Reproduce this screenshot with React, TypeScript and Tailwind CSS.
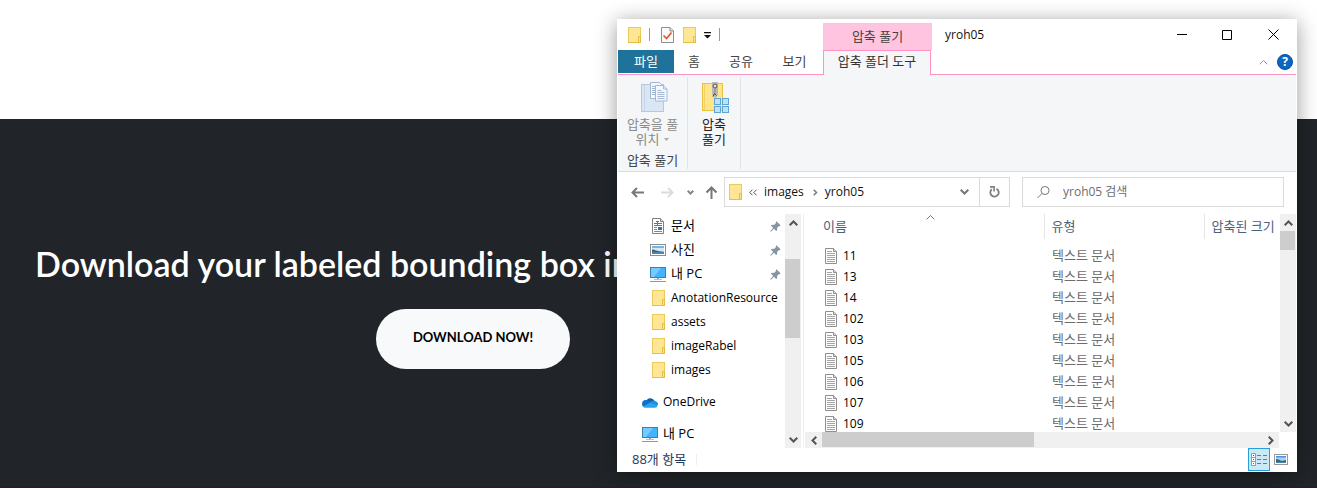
import type { ReactNode } from "react";

const FolderIcon = () => (
  <svg width="14" height="16" viewBox="0 0 14 16" className="shrink-0" aria-hidden="true">
    <rect x="0.5" y="0.5" width="12" height="15" fill="#ffe694" stroke="#ecc95a" />
    <path d="M10.5 9.5h2v6h-2z" fill="#ffe28a" stroke="#e5bd45" />
    <path d="M0.500 15.500h12.500" stroke="#e8c040" />
  </svg>
);

const CheckDocIcon = () => (
  <svg width="13" height="16" viewBox="0 0 13 16" aria-hidden="true">
    <path d="M0.500 0.500h8.500l3.500 3.500v11.500h-12z" fill="#fafafa" stroke="#8f8f8f" />
    <path d="M9 0.500v3.500h3.500" fill="#ddd" stroke="#8f8f8f" />
    <path d="M2.500 8.500l3 3 5-6" fill="none" stroke="#e0592a" strokeWidth="1.700" />
  </svg>
);

const TextFileIcon = () => (
  <svg width="12" height="16" viewBox="0 0 12 16" className="shrink-0" aria-hidden="true">
    <path d="M0.500 0.500h8l3 3v12h-11z" fill="#fdfdfd" stroke="#8e8e8e" />
    <path d="M8.500 0.500v3h3" fill="#ddd" stroke="#8e8e8e" />
    <path d="M2 3.500h5M2 5.500h8M2 7.500h8M2 9.500h8M2 11.500h8M2 13.500h8" stroke="#a4a4a4" />
  </svg>
);

const DocumentsIcon = () => (
  <svg width="16" height="16" viewBox="0 0 16 16" className="shrink-0" aria-hidden="true">
    <path d="M2.500 0.500h8l3 3v12h-11z" fill="#fff" stroke="#808080" />
    <path d="M10.500 0.500v3h3" fill="#ddd" stroke="#808080" />
    <path d="M4 5.500h3M6 3.500h3M8 5.500h4M4 7.500h8M7.500 3v5" stroke="#1c8ad0" />
    <path d="M4 9.500h3M4 11.500h3M4 13.500h8" stroke="#888" />
    <rect x="8" y="9" width="4" height="3" fill="#2b78ad" />
  </svg>
);

const PictureIcon = () => (
  <svg width="16" height="12" viewBox="0 0 16 12" className="shrink-0" aria-hidden="true">
    <rect x="0.500" y="0.500" width="15" height="11" fill="#fff" stroke="#8d8d8d" />
    <rect x="2" y="2" width="12" height="8" fill="#cfe8fa" />
    <rect x="2" y="2" width="12" height="2" fill="#79b1ea" />
    <path d="M2 5.500c3 0 5 2 12 2.200V8H2z" fill="#3f6b5c" />
    <rect x="2" y="8" width="12" height="2" fill="#4d84a8" />
  </svg>
);

const ThumbnailIcon = () => (
  <svg width="14" height="11" viewBox="0 0 14 11" className="shrink-0" aria-hidden="true">
    <rect x="0.500" y="0.500" width="13" height="10" fill="#fff" stroke="#999" />
    <rect x="2" y="2" width="10" height="7" fill="#a9d2f5" />
    <path d="M2 2h10v1.500H2z" fill="#4f93dd" />
    <path d="M2 5c2.500 0 4 1.500 6 2l4-1v3H2z" fill="#3b6a62" />
    <path d="M2 8h10v1H2z" fill="#4a86b0" />
  </svg>
);

const PcIcon = () => (
  <svg width="16" height="15" viewBox="0 0 16 15" className="shrink-0" aria-hidden="true">
    <rect x="0.500" y="0.500" width="15" height="10" fill="#43b4fb" stroke="#3d7fae" />
    <path d="M1 1h10L4 10H1z" fill="#74cbff" />
    <path d="M7 11h2v1.500H7z" fill="#9aabb8" />
    <path d="M4 12.500h8" stroke="#b4c0ca" />
    <path d="M0 14.500h16" stroke="#8499a8" />
  </svg>
);

const CloudIcon = () => (
  <svg width="16" height="11" viewBox="0 0 16 11" className="shrink-0" aria-hidden="true">
    <path d="M4 4.500A4.600 4.600 0 0 1 12.500 3.800L9 7z" fill="#0f5fb0" />
    <path d="M3.600 3C5.500 2.800 7 3.600 9 5L3 10.500A3.800 3.800 0 0 1 3.600 3z" fill="#0a74cc" />
    <path d="M8 5.200c1.500-1.500 3.500-1.800 4.800-1.300A3.400 3.400 0 0 1 15.900 8l-5 1z" fill="#1a8fe0" />
    <path d="M8.500 5.500L15.700 8.500A3 3 0 0 1 13 10.800H3.600A3.300 3.300 0 0 1 1.200 9.500z" fill="#2ba3ec" />
  </svg>
);

const PinIcon = () => (
  <svg width="11" height="11" viewBox="0 0 11 11" className="shrink-0" aria-hidden="true">
    <path d="M6.500 0.300l4.200 4.200-1 0.800-0.700-0.200-2 2 0.200 2-1 1L4 7.800 0.800 10.800 0.200 10.200 3.200 7 1 4.800l1-1 2 0.200 2-2-0.200-0.800z" fill="#8595a3" />
  </svg>
);

const CopyFolderIcon = () => (
  <svg width="27" height="31" viewBox="0 0 27 31" aria-hidden="true">
    <rect x="0.500" y="2.500" width="22" height="27" fill="#dbe6f4" stroke="#b6c7e0" />
    <path d="M3.500 3v26" stroke="#c6d4e8" />
    <path d="M9.500 0.500h9l3 3v13h-12z" fill="#f4f8fc" stroke="#a5b8d3" />
    <path d="M11 4.500h5M11 6.500h3M11 8.500h3M11 10.500h3M11 12.500h3" stroke="#a5b8d3" />
    <path d="M14.500 3.500h8l3.500 3.500v12h-11.500z" fill="#f4f8fc" stroke="#a5b8d3" />
    <path d="M22.500 3.500v3.500h3.500M16.500 8.500h4M16.500 10.500h7M16.500 12.500h7M16.500 14.500h7M16.500 16.500h7" fill="none" stroke="#a5b8d3" />
  </svg>
);

const ZipIcon = () => (
  <svg width="27" height="31" viewBox="0 0 27 31" aria-hidden="true">
    <rect x="0.500" y="1.500" width="20" height="27" fill="#ffe48c" stroke="#e8c13f" />
    <path d="M2.500 2v26" stroke="#f4d266" />
    <path d="M10 0h6v12l-1.500 3.500h-3L10 12z" fill="#b8b8b8" />
    <circle cx="13" cy="4" r="2" fill="#ddd" stroke="#555" />
    <path d="M13 6v5" stroke="#888" />
    <path d="M11 14.500l1.500-3 2 2" fill="none" stroke="#444" />
    <g fill="#b9e2fb" stroke="#62a3d0">
      <rect x="12.500" y="16.500" width="6" height="6" />
      <rect x="20.500" y="16.500" width="6" height="6" />
      <rect x="12.500" y="24.500" width="6" height="6" />
      <rect x="20.500" y="24.500" width="6" height="6" />
    </g>
  </svg>
);

type StrokeProps = { d: string; w: number; h: number; color: string; stroke?: number };
const Stroke = ({ d, w, h, color, stroke = 2 }: StrokeProps) => (
  <svg width={w} height={h} viewBox={`0 0 ${w} ${h}`} fill="none" stroke={color} strokeWidth={stroke} className="shrink-0" aria-hidden="true">
    <path d={d} />
  </svg>
);

const UP = "M0.700 5.300L4.500 1.500l3.800 3.800";
const DOWN = "M0.700 0.700L4.500 4.500l3.800-3.800";

const files = ["11", "13", "14", "102", "103", "105", "106", "107", "109"];

const pinnedPlaces: { name: string; icon: ReactNode }[] = [
  { name: "문서", icon: <DocumentsIcon /> },
  { name: "사진", icon: <PictureIcon /> },
  { name: "내 PC", icon: <PcIcon /> },
];

const folders = ["AnotationResource", "assets", "imageRabel", "images"];

function TitleBar() {
  return (
    <header className="flex h-[31px] items-center">
      <div className="flex w-[205px] items-center pl-[10px]">
        <FolderIcon />
        <span className="ml-[7px] h-[13px] w-px bg-[#999]" />
        <button aria-label="속성" className="ml-[11px]"><CheckDocIcon /></button>
        <button aria-label="새 폴더" className="ml-[9px]"><FolderIcon /></button>
        <button aria-label="빠른 실행 도구 모음" className="ml-[7px] pt-[2px]">
          <svg width="7" height="7" viewBox="0 0 7 7" aria-hidden="true">
            <path d="M0 0h7v1.200H0zM0 3h7L3.500 6.500z" fill="#111" />
          </svg>
        </button>
        <span className="ml-[8px] h-[13px] w-px bg-[#999]" />
      </div>
      <div className="flex h-[27px] w-[109px] items-center justify-center self-end bg-[#ffc4df] pb-[2px] text-[#444]">압축 풀기</div>
      <h2 className="ml-[13px] text-[12px] text-[#111]">yroh05</h2>
      <div className="ml-auto flex h-full">
        <button aria-label="최소화" className="flex w-[45px] items-center justify-center">
          <Stroke w={10} h={11} d="M0 5.500h10" color="#000" stroke={1} />
        </button>
        <button aria-label="최대화" className="flex w-[46px] items-center justify-center">
          <Stroke w={10} h={10} d="M0.500 0.500h9v9h-9z" color="#000" stroke={1} />
        </button>
        <button aria-label="닫기" className="flex w-[46px] items-center justify-center">
          <Stroke w={11} h={11} d="M0.500 0.500l10 10M10.500 0.500l-10 10" color="#000" stroke={1} />
        </button>
      </div>
    </header>
  );
}

function Tabs() {
  return (
    <nav className="flex h-[25px] border-b border-[#ff94c4] text-[#444]">
      <button className="h-[23px] w-[56px] bg-[#1f7299] pb-[2px] text-white">파일</button>
      <button className="h-[23px] w-[40px] pb-[2px]">홈</button>
      <button className="h-[23px] w-[54px] pb-[2px]">공유</button>
      <button className="h-[23px] w-[53px] pb-[2px]">보기</button>
      <button className="ml-[2px] h-[25px] w-[108px] border-x border-t border-[#ff94c4] bg-[#f5f6f7] pb-[5px] text-[#333]">압축 폴더 도구</button>
      <div className="ml-auto flex items-center gap-[9px] pr-[3px]">
        <button aria-label="리본 최소화">
          <Stroke w={9} h={6} d={UP} color="#999" stroke={1} />
        </button>
        <button aria-label="도움말" className="flex size-4 items-center justify-center rounded-full border border-[#0a4f98] bg-[#0b66c3] text-[12px] leading-[14px] font-bold text-white">?</button>
      </div>
    </nav>
  );
}

function Ribbon() {
  return (
    <div className="flex h-[97px] border-b border-[#dadbdc] bg-[#f5f6f7] py-[2px]">
      <section className="flex w-[70px] flex-col items-center border-r border-[#e2e3e4] pt-[5px]">
        <button className="flex flex-col items-center leading-[15px] text-[#8a8a8a]">
          <span className="ml-[3px]"><CopyFolderIcon /></span>
          <span className="mt-[4px]">압축을 풀</span>
          <span className="flex items-center gap-[5px]">
            위치
            <svg width="5" height="3" viewBox="0 0 5 3" aria-hidden="true"><path d="M0 0h5L2.500 3z" fill="#aaa" /></svg>
          </span>
        </button>
        <h3 className="mt-[5px] leading-[17px] text-[#444]">압축 풀기</h3>
      </section>
      <section className="flex w-[53px] flex-col items-center border-r border-[#e2e3e4] pt-[5px]">
        <button className="flex flex-col items-center leading-[15px] text-[#222]">
          <span className="ml-[3px]"><ZipIcon /></span>
          <span className="mt-[4px]">압축</span>
          <span>풀기</span>
        </button>
      </section>
    </div>
  );
}

function AddressRow() {
  return (
    <div className="flex h-[42px] items-center pr-[12px] pb-[2px] pl-[13px]">
      <button aria-label="뒤로"><Stroke w={13} h={11} d="M6 1L1.500 5.500 6 10M1.500 5.500H13" color="#777" /></button>
      <button aria-label="앞으로" className="ml-[17px]"><Stroke w={13} h={11} d="M7 1l4.500 4.500L7 10M0 5.500h11.500" color="#dcdcdc" /></button>
      <button aria-label="최근 위치" className="ml-[13px]"><Stroke w={7} h={5} d="M0.700 0.700L3.500 3.500l2.800-2.800" color="#888" /></button>
      <button aria-label="위로" className="ml-[11px]"><Stroke w={13} h={13} d="M1.500 6.500l5-5 5 5M6.500 1.500V13" color="#777" /></button>
      <div className="ml-[6px] flex h-[30px] w-[286px] items-center border border-[#d9d9d9] pl-[4px] text-[12px] text-[#111]">
        <FolderIcon />
        <span className="ml-[6px]"><Stroke w={8} h={7} d="M3.500 0.700L0.800 3.500l2.700 2.800M7.500 0.700L4.800 3.500l2.700 2.800" color="#555" stroke={1} /></span>
        <a href="#images" className="ml-[7px]">images</a>
        <span className="ml-[9px]"><Stroke w={5} h={7} d="M0.700 0.700l2.800 2.800-2.800 2.800" color="#777" stroke={1.5} /></span>
        <a href="#yroh05" className="ml-[7px]">yroh05</a>
        <button aria-label="이전 위치" className="mr-[10px] ml-auto"><Stroke w={9} h={6} d={DOWN} color="#777" /></button>
        <button aria-label="새로 고침" className="flex h-full w-[30px] items-center justify-center border-l border-[#d9d9d9]">
          <svg width="11" height="12" viewBox="0 0 11 12" fill="none" aria-hidden="true">
            <path d="M7.500 2.700A4.200 4.200 0 1 1 2.800 3.200" stroke="#808080" strokeWidth="1.800" />
            <path d="M1 0.900h4.100v4.600" stroke="#808080" strokeWidth="1.600" />
          </svg>
        </button>
      </div>
      <label className="ml-[12px] flex h-[30px] min-w-0 flex-1 items-center border border-[#d9d9d9] pl-[14px]">
        <Stroke w={13} h={13} d="M12 4.500a4 4 0 1 1-8 0a4 4 0 1 1 8 0M5 7.500L0.500 12" color="#777" stroke={1} />
        <input aria-label="검색" placeholder="yroh05 검색" className="ml-[13px] w-full min-w-0 bg-transparent text-[12px] outline-none placeholder:text-[#6d6d6d]" />
      </label>
    </div>
  );
}

function NavPane() {
  return (
    <aside className="flex w-[186px] shrink-0 border-r border-[#f0f0f0]">
      <div className="min-w-0 flex-1 text-black">
        <ul>
          {pinnedPlaces.map((p) => (
            <li key={p.name} className="flex h-6 items-center pr-[4px] pl-[32px]">
              {p.icon}
              <span className="ml-[5px] pb-[2px]">{p.name}</span>
              <span className="ml-auto"><PinIcon /></span>
            </li>
          ))}
          {folders.map((name) => (
            <li key={name} className="flex h-6 items-center pl-[34px] text-[12px]">
              <FolderIcon />
              <span className="ml-[5px]">{name}</span>
            </li>
          ))}
        </ul>
        <div className="mt-2 flex h-6 items-center gap-[5px] pl-[24px] text-[12px]"><CloudIcon />OneDrive</div>
        <div className="mt-2 flex h-6 items-center gap-[5px] pl-[24px]"><PcIcon /><span className="pb-[2px]">내 PC</span></div>
      </div>
      <div className="mr-[2px] flex w-[16px] flex-col items-center bg-[#f0f0f0]">
        <span className="flex h-[17px] items-center"><Stroke w={9} h={6} d={UP} color="#555" /></span>
        <span className="mt-[28px] mr-px h-[79px] w-[15px] bg-[#cdcdcd]" />
        <span className="mt-auto flex h-[17px] items-center"><Stroke w={9} h={6} d={DOWN} color="#555" /></span>
      </div>
    </aside>
  );
}

function FileList() {
  return (
    <main className="ml-px flex min-w-0 flex-1 flex-col">
      <div className="flex h-[218px]">
        <div className="min-w-0 flex-1 overflow-hidden">
          <table className="w-full table-fixed border-collapse text-left">
            <colgroup>
              <col className="w-[239px]" />
              <col className="w-[160px]" />
              <col />
            </colgroup>
            <thead className="text-[#4c607a]">
              <tr className="h-[25px]">
                <th className="relative border-r border-[#e5e5e5] p-0 pb-[2px] pl-[18px] font-normal">
                  이름
                  <span className="absolute top-0 left-[121px]"><Stroke w={9} h={6} d={UP} color="#777" stroke={1} /></span>
                </th>
                <th className="border-r border-[#e5e5e5] p-0 pb-[2px] pl-[7px] font-normal">유형</th>
                <th className="p-0 pb-[2px] pl-[7px] font-normal whitespace-nowrap">압축된 크기</th>
              </tr>
              <tr className="h-[6px]"><td colSpan={3} className="p-0" /></tr>
            </thead>
            <tbody>
              {files.map((f) => (
                <tr key={f} className="h-[21px]">
                  <td className="p-0 pl-[20px]">
                    <span className="flex items-center gap-[6px] text-[12px] leading-[21px] text-black"><TextFileIcon />{f}</span>
                  </td>
                  <td className="p-0 pl-[8px] leading-[21px] text-[#6d6d6d]">텍스트 문서</td>
                  <td className="p-0" />
                </tr>
              ))}
            </tbody>
          </table>
        </div>
        <div className="ml-px flex w-[16px] flex-col items-center bg-[#f0f0f0]">
          <span className="flex h-[17px] items-center"><Stroke w={9} h={6} d={UP} color="#555" /></span>
          <span className="mr-px h-[19px] w-[15px] bg-[#cdcdcd]" />
          <span className="mt-auto flex h-[17px] items-center"><Stroke w={9} h={6} d={DOWN} color="#555" /></span>
        </div>
      </div>
      <div className="mr-[17px] flex h-[16px] items-center bg-[#f0f0f0]">
        <span className="flex w-[17px] justify-center"><Stroke w={6} h={9} d="M5.300 0.700L1.500 4.500l3.800 3.800" color="#555" /></span>
        <span className="mb-px h-[15px] w-[212px] bg-[#cdcdcd]" />
        <span className="ml-auto flex w-[17px] justify-center"><Stroke w={6} h={9} d="M0.700 0.700l3.800 3.800-3.800 3.800" color="#555" /></span>
      </div>
    </main>
  );
}

function StatusBar() {
  return (
    <footer className="flex h-[24px] items-center pr-[8px] pb-px pl-[14px] text-[#1e395b]">
      <span className="pb-[2px]">88개 항목</span>
      <span className="ml-[10px] h-[11px] w-px bg-[#eee]" />
      <button aria-label="자세히" className="ml-auto flex h-[23px] w-[22px] items-center justify-center border border-[#26a0da] bg-[#cce8f6]">
        <svg width="16" height="13" viewBox="0 0 16 13" aria-hidden="true">
          <path d="M0.500 0.500h4v12h-4zM0.500 4.500h4M0.500 8.500h4" fill="#fff" stroke="#999" />
          <path d="M2 2h1v1H2z" fill="#444" /><path d="M2 6h1v1H2z" fill="#2878c0" /><path d="M2 10h1v1H2z" fill="#d03030" />
          <path d="M6 2.500h4M12 2.500h4M6 6.500h4M12 6.500h4M6 10.500h4M12 10.500h4" stroke="#777" />
        </svg>
      </button>
      <button aria-label="큰 아이콘" className="ml-[4px]"><ThumbnailIcon /></button>
    </footer>
  );
}

export default function App() {
  return (
    <div className="relative flex min-h-screen flex-col overflow-hidden bg-white pt-[119px]">
      <section className="flex-1 border-b border-[#2a1a2a] bg-[#212529] font-['Lato','Open_Sans',sans-serif]">
        <div className="flex max-w-[946px] flex-col px-[35px] pt-[123px]">
          <h1 className="text-[34px] leading-[44px] font-semibold whitespace-nowrap text-white">Download your labeled bounding box in</h1>
          <button className="mt-[23px] h-[60px] self-center rounded-[30px] bg-[#f8f9fa] px-[37px] pb-[2px] text-[13px] font-bold text-black">DOWNLOAD NOW!</button>
        </div>
      </section>
      <div className="absolute top-[19px] right-5 w-[680px] bg-white px-px font-['Open_Sans','Noto_Sans_CJK_KR',sans-serif] text-[13px] leading-[18px] shadow-[0_3px_20px_rgba(0,0,0,0.4)]">
        <TitleBar />
        <Tabs />
        <Ribbon />
        <AddressRow />
        <div className="flex">
          <NavPane />
          <FileList />
        </div>
        <StatusBar />
      </div>
    </div>
  );
}
